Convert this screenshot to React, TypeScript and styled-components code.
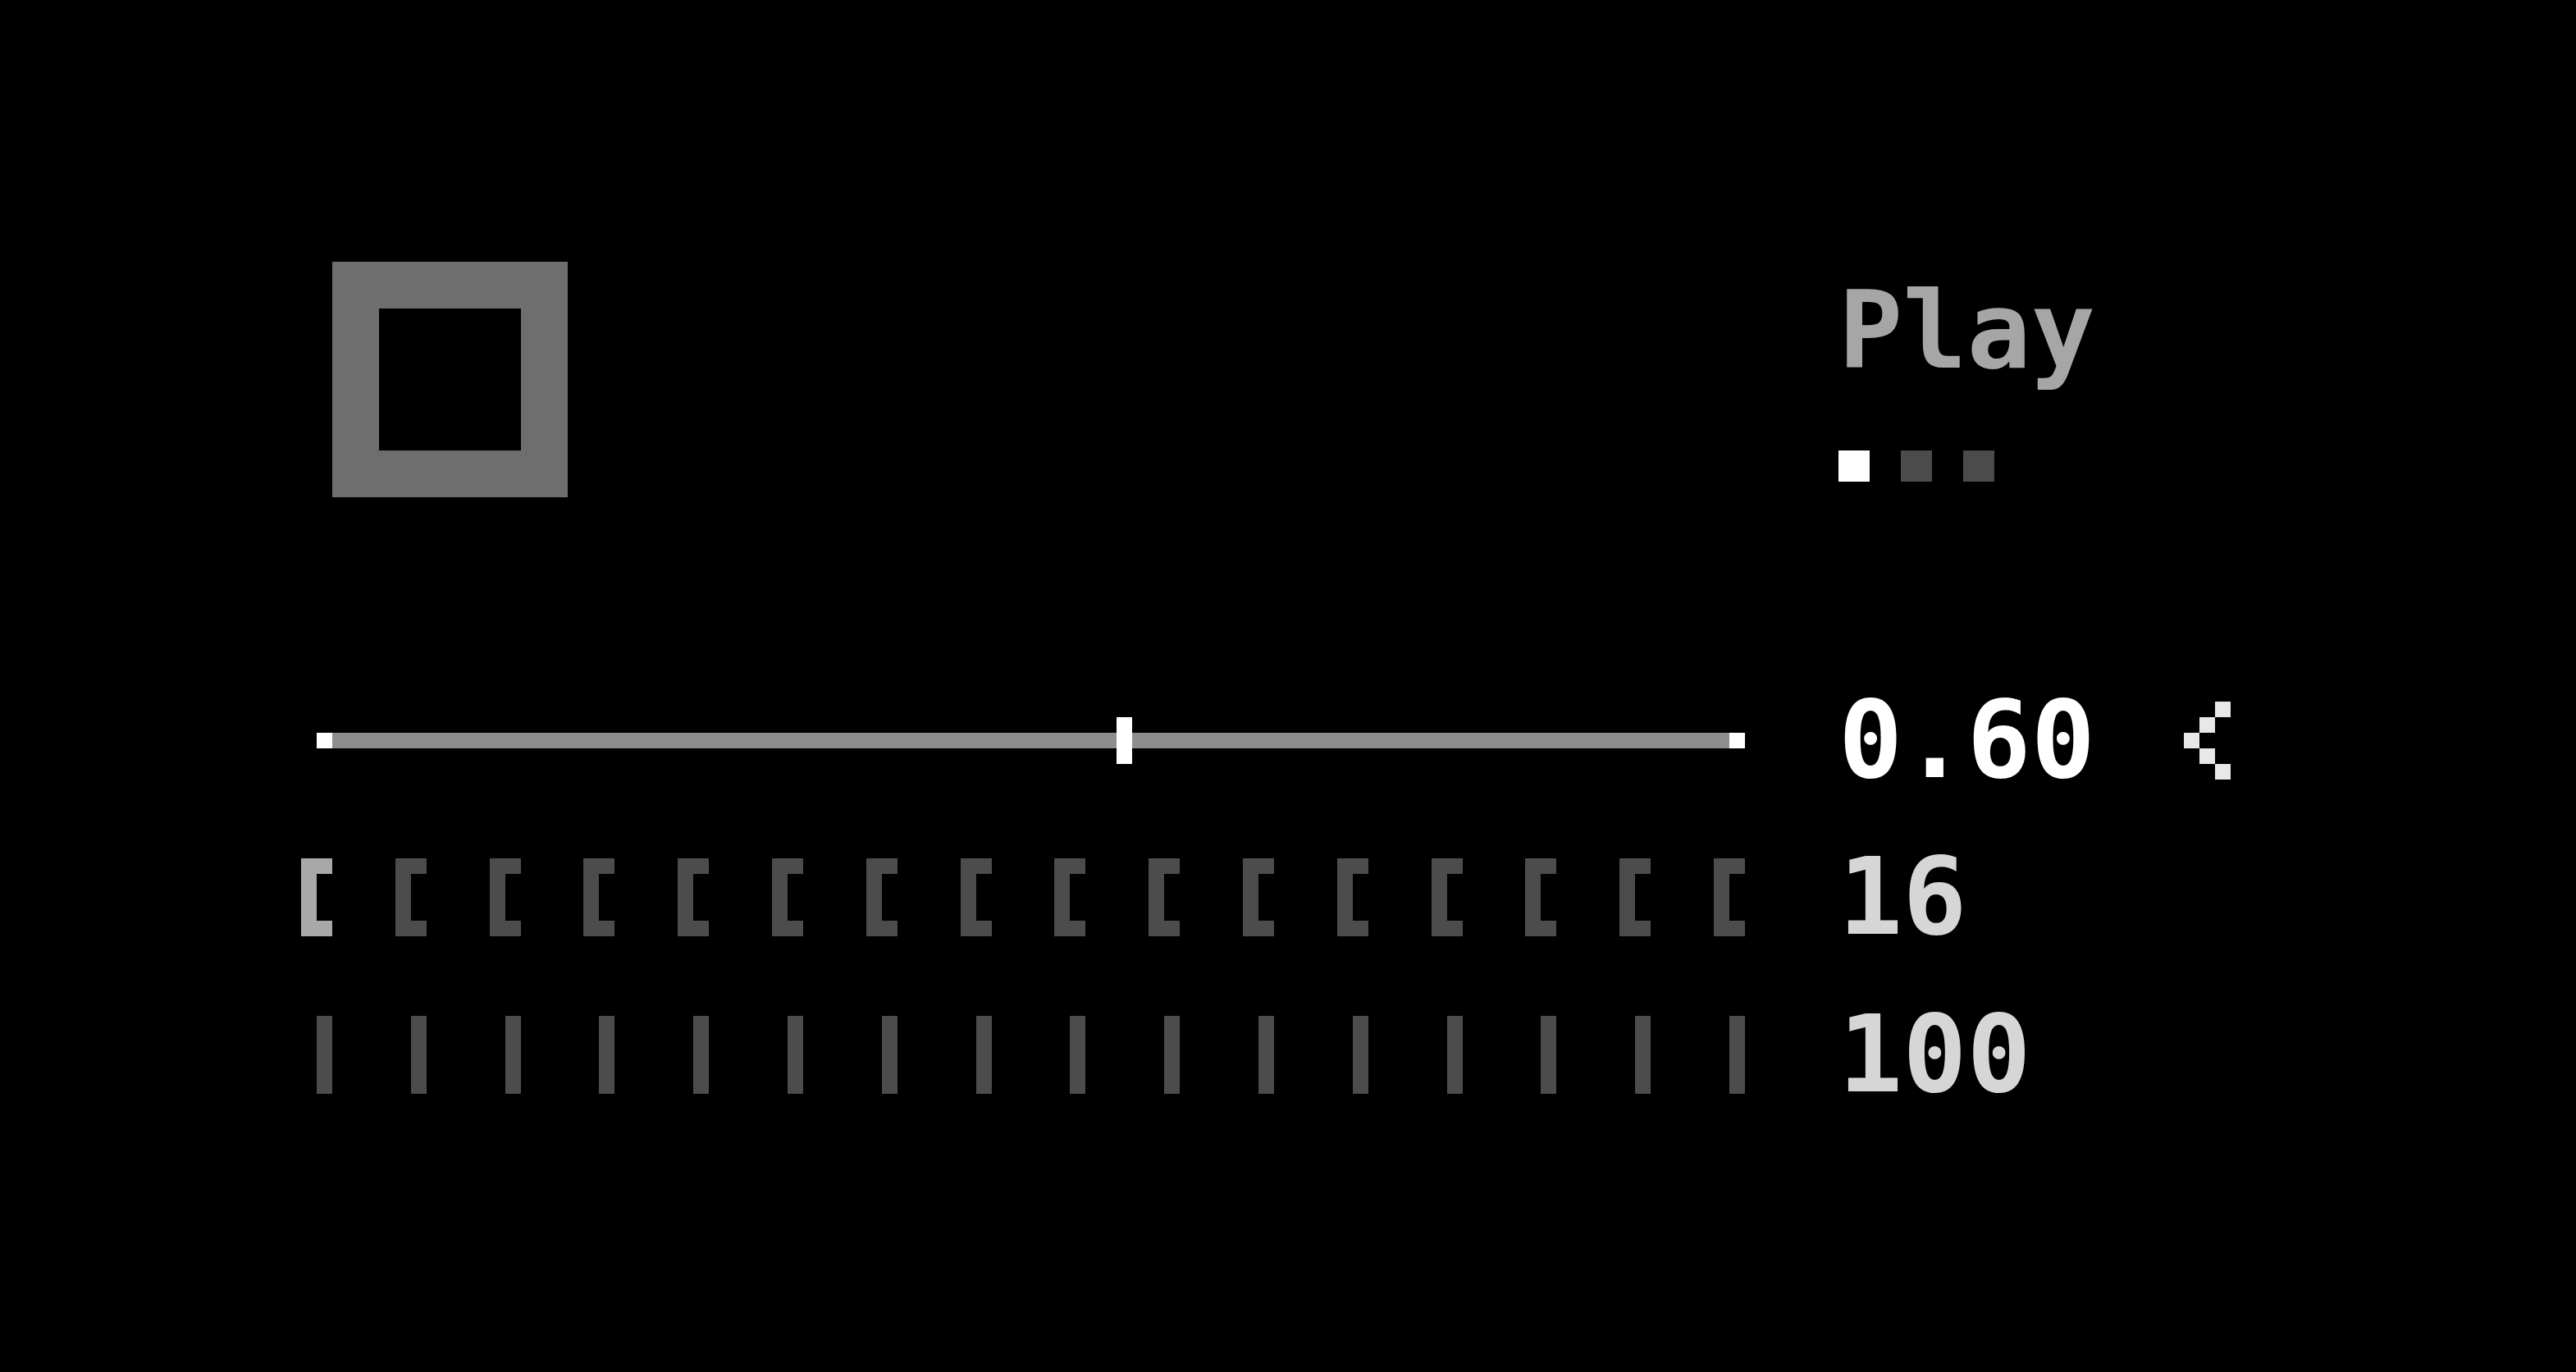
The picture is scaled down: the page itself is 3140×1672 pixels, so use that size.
import React from "react";
import styled, { createGlobalStyle } from "styled-components";

const GlobalStyle = createGlobalStyle`
  html, body {
    margin: 0;
    padding: 0;
    background: #000;
  }
  body {
    font-family: "DejaVu Sans Mono", "Liberation Mono", monospace;
  }
`;

const Screen = styled.div`
  width: 3140px;
  height: 1672px;
  box-sizing: border-box;
  background: #000;
  padding: 319px 0 0 367px;
  display: flex;
  flex-direction: column;
  gap: 249px;
`;

const Section = styled.section<{ $rows?: string }>`
  display: grid;
  grid-template-columns: 1760px 1fr;
  column-gap: 114px;
  grid-auto-rows: ${(p) => p.$rows ?? "auto"};
  row-gap: 96.3px;
`;

const PreviewBox = styled.div`
  margin-left: 38px;
  width: 287px;
  height: 287px;
  box-sizing: border-box;
  border: 57px solid #6e6e6e;
  background: #000;
`;

const TitleBlock = styled.div`
  padding-top: 37px;
  display: flex;
  flex-direction: column;
`;

const Title = styled.div`
  font-family: "DejaVu Sans Mono", "Liberation Mono", monospace;
  font-weight: bold;
  font-size: 130px;
  line-height: 95px;
  height: 95px;
  color: #a6a6a6;
  white-space: nowrap;
`;

const Pager = styled.div`
  margin-top: 98px;
  display: flex;
  gap: 38px;
`;

const PagerDot = styled.span<{ $active?: boolean }>`
  width: 38px;
  height: 38px;
  background: ${(p) => (p.$active ? "#ffffff" : "#4b4b4b")};
`;

const SliderCell = styled.div`
  position: relative;
  margin-left: 19px;
  height: 95px;
  display: flex;
  align-items: center;
`;

const Track = styled.div`
  flex: 1;
  height: 19px;
  display: flex;
`;

const TrackCap = styled.span`
  width: 19px;
  height: 19px;
  background: #ffffff;
`;

const TrackBar = styled.span`
  flex: 1;
  height: 19px;
  background: #8e8e8e;
`;

const Thumb = styled.span`
  position: absolute;
  top: 19px;
  width: 19px;
  height: 57px;
  background: #ffffff;
`;

const StepRow = styled.div<{ $inset?: number }>`
  height: 95px;
  padding-left: ${(p) => p.$inset ?? 0}px;
  display: flex;
  justify-content: space-between;
  align-items: stretch;
`;

const Bracket = styled.span<{ $active?: boolean }>`
  width: 38px;
  height: 95px;
  box-sizing: border-box;
  border-style: solid;
  border-width: 19px 0 19px 19px;
  border-color: ${(p) => (p.$active ? "#a8a8a8" : "#4c4c4c")};
`;

const Tick = styled.span`
  width: 19px;
  height: 95px;
  background: #4c4c4c;
`;

const ValueRow = styled.div`
  display: flex;
  align-items: flex-start;
  height: 95px;
`;

const Value = styled.span<{ $color: string }>`
  font-family: "DejaVu Sans Mono", "Liberation Mono", monospace;
  font-weight: bold;
  font-size: 130px;
  line-height: 95px;
  height: 95px;
  color: ${(p) => p.$color};
  white-space: nowrap;
`;

const Marker = styled.svg`
  margin-left: 108px;
  display: block;
  flex: none;
`;

const ChevronLeft = () => (
  <Marker width="57" height="95" viewBox="0 0 3 5" preserveAspectRatio="none" shapeRendering="crispEdges">
    <rect x="2" y="0" width="1" height="1" fill="#e8e8e8" />
    <rect x="1" y="1" width="1" height="1" fill="#e8e8e8" />
    <rect x="0" y="2" width="1" height="1" fill="#e8e8e8" />
    <rect x="1" y="3" width="1" height="1" fill="#e8e8e8" />
    <rect x="2" y="4" width="1" height="1" fill="#e8e8e8" />
  </Marker>
);

const STEPS = 16;
const activeStep = 0;
const thumbFraction = 0.56;

export default function App() {
  const steps = Array.from({ length: STEPS }, (_, i) => i);
  return (
    <>
      <GlobalStyle />
      <Screen>
        <Section>
          <PreviewBox />
          <TitleBlock>
            <Title>Play</Title>
            <Pager>
              <PagerDot $active />
              <PagerDot />
              <PagerDot />
            </Pager>
          </TitleBlock>
        </Section>

        <Section $rows="95px">
          <SliderCell>
            <Track>
              <TrackCap />
              <TrackBar />
              <TrackCap />
            </Track>
            <Thumb style={{ left: `${thumbFraction * 100}%` }} />
          </SliderCell>
          <ValueRow>
            <Value $color="#ffffff">0.60</Value>
            <ChevronLeft />
          </ValueRow>

          <StepRow>
            {steps.map((i) => (
              <Bracket key={i} $active={i === activeStep} />
            ))}
          </StepRow>
          <ValueRow>
            <Value $color="#d6d6d6">16</Value>
          </ValueRow>

          <StepRow $inset={19}>
            {steps.map((i) => (
              <Tick key={i} />
            ))}
          </StepRow>
          <ValueRow>
            <Value $color="#d6d6d6">100</Value>
          </ValueRow>
        </Section>
      </Screen>
    </>
  );
}
